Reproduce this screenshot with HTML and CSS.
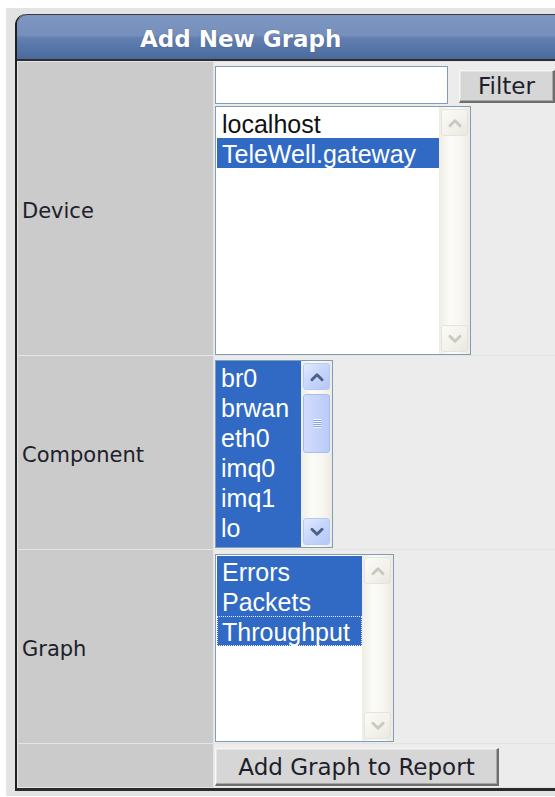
FILE: index.html
```html
<!DOCTYPE html>
<html lang="en">
<head>
<meta charset="utf-8">
<title>Add New Graph</title>
<link rel="stylesheet" href="styles.css">
</head>
<body>
<div class="page">
  <div class="panel">
    <div class="panel-head">Add New Graph</div>
    <div class="form-grid">
      <div class="label">Device</div>
      <div class="field field-device">
        <div class="filter-row">
          <input class="text-input" type="text" value="">
          <button class="btn btn-filter" type="button">Filter</button>
        </div>
        <div class="listbox listbox-device">
          <ul class="options">
            <li>localhost</li>
            <li class="sel">TeleWell.gateway</li>
          </ul>
          <div class="scrollbar is-disabled">
            <div class="sb-btn"><svg viewBox="0 0 16 16"><polyline points="3.5,10.5 8,6 12.5,10.5"/></svg></div>
            <div class="sb-track"></div>
            <div class="sb-btn"><svg viewBox="0 0 16 16"><polyline points="3.5,5.5 8,10 12.5,5.5"/></svg></div>
          </div>
        </div>
      </div>

      <div class="label">Component</div>
      <div class="field">
        <div class="listbox listbox-component">
          <ul class="options all-sel">
            <li class="sel">br0</li>
            <li class="sel">brwan</li>
            <li class="sel">eth0</li>
            <li class="sel">imq0</li>
            <li class="sel">imq1</li>
            <li class="sel">lo</li>
            <li class="sel">ppp0</li>
          </ul>
          <div class="scrollbar">
            <div class="sb-btn"><svg viewBox="0 0 16 16"><polyline points="3.5,10.5 8,6 12.5,10.5"/></svg></div>
            <div class="sb-track">
              <div class="sb-thumb"><span class="grip"></span></div>
            </div>
            <div class="sb-btn"><svg viewBox="0 0 16 16"><polyline points="3.5,5.5 8,10 12.5,5.5"/></svg></div>
          </div>
        </div>
      </div>

      <div class="label">Graph</div>
      <div class="field">
        <div class="listbox listbox-graph">
          <ul class="options">
            <li class="sel">Errors</li>
            <li class="sel">Packets</li>
            <li class="sel focus">Throughput</li>
          </ul>
          <div class="scrollbar is-disabled">
            <div class="sb-btn"><svg viewBox="0 0 16 16"><polyline points="3.5,10.5 8,6 12.5,10.5"/></svg></div>
            <div class="sb-track"></div>
            <div class="sb-btn"><svg viewBox="0 0 16 16"><polyline points="3.5,5.5 8,10 12.5,5.5"/></svg></div>
          </div>
        </div>
      </div>

      <div class="label"></div>
      <div class="field">
        <button class="btn btn-add" type="button">Add Graph to Report</button>
      </div>
    </div>
  </div>
</div>
</body>
</html>
```

FILE: styles.css
```css
html, body {
  margin: 0;
  padding: 0;
  background: #ffffff;
  overflow: hidden;
}

.page {
  margin: 8px 0 0 6px;
  padding: 6px 0 5px 9px;
  background: #e3e3e3;
  overflow: hidden;
}

.panel {
  width: 620px;
  border-left: 2px solid #1f1f1f;
  border-bottom: 3px solid #2a2a2a;
  border-top-left-radius: 11px;
  background: #e4e4e4;
}

/* blue title bar with a glossy lower half */
.panel-head {
  height: 47px;
  box-sizing: border-box;
  border-top: 1px solid #3a3a3a;
  border-bottom: 2px solid #2e2e2e;
  border-top-left-radius: 10px;
  background: linear-gradient(#7d96c1 0%, #7690bd 46%, #627fb0 52%, #5675a8 75%, #4a6a9f 100%);
  color: #ffffff;
  font-family: "DejaVu Sans", Verdana, sans-serif;
  font-weight: bold;
  font-size: 23px;
  line-height: 44px;
  padding: 2px 0 0 123px;
  text-shadow: 0 0 1px rgba(30, 45, 80, 0.6);
}

.form-grid {
  display: grid;
  grid-template-columns: 195px 1fr;
  grid-template-rows: 293px 193px 193px 43px;
  gap: 1px;
  padding: 1px 0 1px 1px;
}

.label {
  background: #cbcbcb;
  display: flex;
  align-items: center;
  padding: 5px 0 0 4px;
  box-sizing: border-box;
  font-family: "DejaVu Sans", Verdana, sans-serif;
  font-size: 21px;
  color: #20202a;
}

.field {
  background: #ececec;
  padding: 4px 0 0 1px;
  box-sizing: border-box;
}

.filter-row {
  display: flex;
  align-items: flex-end;
  gap: 11px;
  margin-bottom: 2px;
}

.text-input {
  width: 233px;
  height: 38px;
  box-sizing: border-box;
  margin: 0;
  border: 1px solid #7f9db9;
  background: #ffffff;
  padding: 0 4px;
  font-family: "Liberation Sans", Arial, sans-serif;
  font-size: 22px;
  outline: none;
}

/* classic raised push button */
.btn {
  margin: 0;
  box-sizing: border-box;
  background: #d6d6d6;
  border-style: solid;
  border-width: 1px 2px 2px 1px;
  border-color: #f7f7f7 #6e6e6e #6e6e6e #f7f7f7;
  box-shadow: inset -1px -1px 0 #a8a8a8, inset 1px 1px 0 #e4e4e4;
  font-family: "DejaVu Sans", Verdana, sans-serif;
  font-size: 23px;
  color: #1e1e2c;
  padding: 0;
  cursor: default;
}

.btn-filter {
  width: 96px;
  height: 33px;
  line-height: 29px;
  margin-bottom: 1px;
}

.btn-add {
  width: 284px;
  height: 38px;
  line-height: 34px;
}

/* list boxes */
.listbox {
  display: flex;
  box-sizing: border-box;
  border: 1px solid #7f9db9;
  background: #ffffff;
  overflow: hidden;
}

.listbox-device { width: 256px; height: 249px; }
.listbox-component { width: 118px; height: 188px; }
.listbox-graph { width: 179px; height: 188px; }

.options {
  list-style: none;
  margin: 0;
  padding: 1px 0 0 1px;
  flex: 1;
  min-width: 0;
  overflow: hidden;
  font-family: "Liberation Sans", Arial, sans-serif;
  font-size: 25px;
  line-height: 30px;
  color: #111111;
}

.options.all-sel {
  padding: 1px 0 0 0;
  background: #316ac5;
}

.options li {
  padding: 2px 0 0 5px;
  height: 30px;
  line-height: 28px;
  white-space: nowrap;
  box-sizing: border-box;
}

.options li.sel {
  background: #316ac5;
  color: #ffffff;
}

.options li.focus {
  border: 1px dotted #f2f2ff;
  padding: 1px 0 0 4px;
  line-height: 28px;
}

/* scroll bars */
.scrollbar {
  width: 31px;
  flex: none;
  display: flex;
  flex-direction: column;
  gap: 2px;
  padding: 2px 2px 2px 2px;
  box-sizing: border-box;
  background: linear-gradient(90deg, #eeede5 0%, #fbfbf8 35%, #f7f6f1 70%, #eceae1 100%);
}

.sb-btn {
  height: 27px;
  flex: none;
  box-sizing: border-box;
  border: 1px solid #b7c9f5;
  border-radius: 3px;
  background: linear-gradient(135deg, #e2eafe 0%, #c6d5fc 50%, #b3c7f6 100%);
  display: flex;
  align-items: center;
  justify-content: center;
}

.sb-btn svg {
  width: 18px;
  height: 18px;
  fill: none;
  stroke: #4d6185;
  stroke-width: 2.6;
  stroke-linecap: round;
  stroke-linejoin: round;
}

.is-disabled .sb-btn {
  border-color: #e6e4da;
  background: linear-gradient(135deg, #fbfbf8 0%, #f2f1eb 60%, #e9e7dd 100%);
}

.is-disabled .sb-btn svg {
  stroke: #cbc9bf;
}

.sb-track {
  flex: 1;
  display: flex;
  flex-direction: column;
}

.sb-thumb {
  height: 59px;
  margin-top: 2px;
  box-sizing: border-box;
  border: 1px solid #a7bdf2;
  border-radius: 3px;
  background: linear-gradient(90deg, #d2ddfd 0%, #c6d4fb 50%, #b9cbf7 100%);
  display: flex;
  align-items: center;
  justify-content: center;
}

.grip {
  width: 8px;
  height: 9px;
  background: repeating-linear-gradient(#eef3ff 0, #eef3ff 1px, #8ea8e6 1px, #8ea8e6 2px);
}
```
